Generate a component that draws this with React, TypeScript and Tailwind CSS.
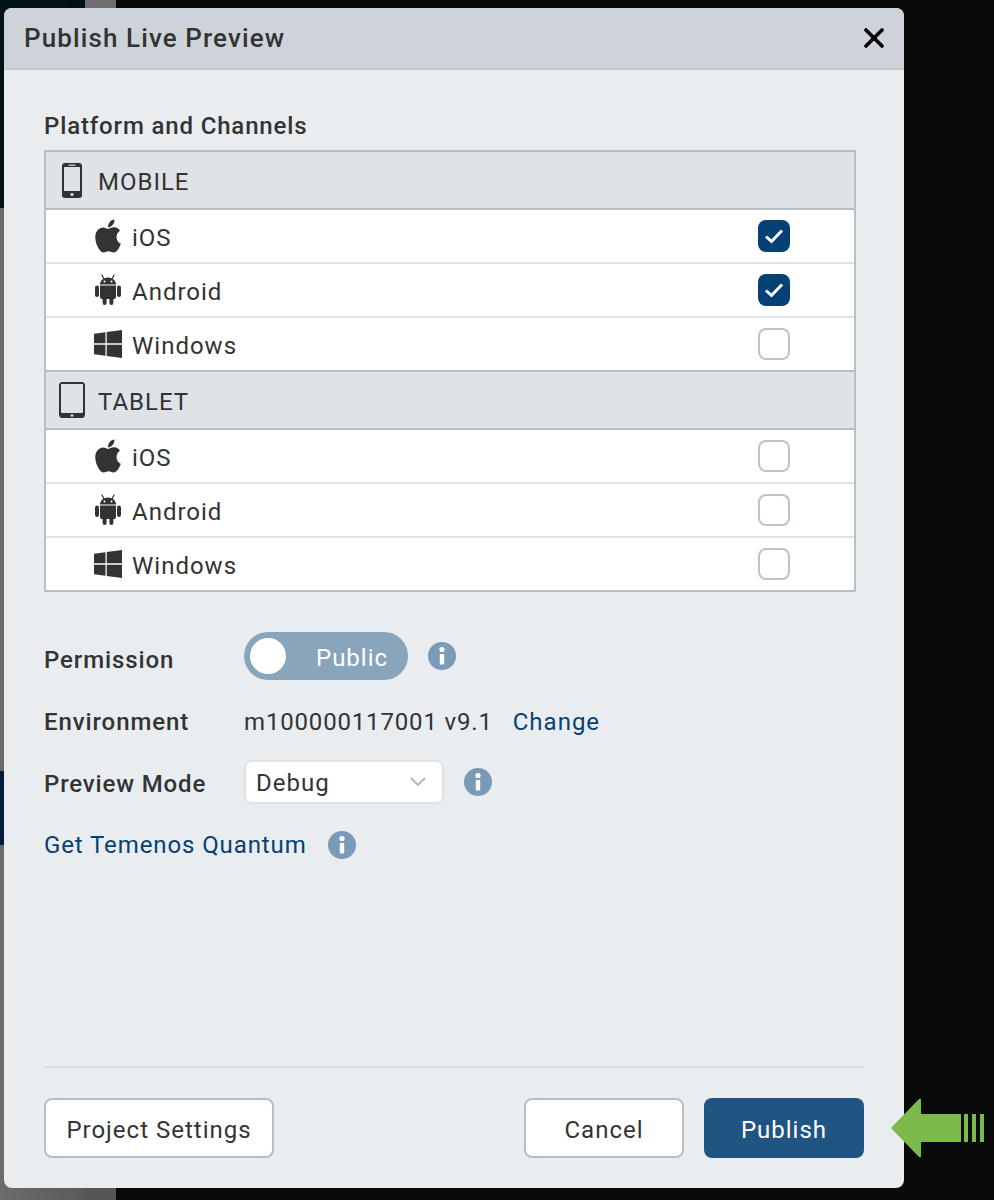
import React from "react";
import { FaApple, FaWindows } from "react-icons/fa";

const Info = ({ className = "" }: { className?: string }) => (
  <svg viewBox="0 0 28 28" className={`h-7 w-7 ${className}`}>
    <circle cx="14" cy="14" r="14" fill="#7b9ab8" />
    <circle cx="14" cy="7.5" r="2.6" fill="#fff" />
    <rect x="11.8" y="12" width="4.4" height="10.5" rx="0.8" fill="#fff" />
  </svg>
);

const Check = ({ on }: { on: boolean }) =>
  on ? (
    <div className="flex h-8 w-8 items-center justify-center rounded-lg bg-[#054174]">
      <svg viewBox="0 0 32 32" className="h-8 w-8" fill="none" stroke="#fff" strokeWidth="3">
        <path d="M8 16.5l5.5 5L24 10.5" />
      </svg>
    </div>
  ) : (
    <div className="h-8 w-8 rounded-lg border-2 border-[#bcc4c9] bg-white" />
  );

const Row = ({ icon, label, on, last }: { icon: React.ReactNode; label: string; on?: boolean; last?: boolean }) => (
  <div className={`flex items-center bg-white pl-[48px] pr-[64px] ${last ? "h-[52px]" : "h-[54px] border-b-2 border-[#e2e3e4]"}`}>
    <div className="flex w-[38px] items-center">{icon}</div>
    <span className="flex-1 pt-[4px] text-[24px] tracking-[1px] text-[#333333]">{label}</span>
    <Check on={!!on} />
  </div>
);

const Phone = () => (
  <svg viewBox="0 0 20 35" className="ml-[16px] h-[35px] w-[20px]">
    <rect x="0" y="0" width="20" height="35" rx="3" fill="#333" />
    <rect x="2" y="4" width="16" height="24" fill="#e0e3e6" />
    <rect x="6.5" y="1.6" width="7" height="1.2" fill="#e0e3e6" />
    <circle cx="10" cy="31.5" r="1.6" fill="#e0e3e6" />
  </svg>
);

const Tablet = () => (
  <svg viewBox="0 0 26 36" className="ml-[13px] h-[36px] w-[26px]">
    <rect x="0" y="0" width="26" height="36" rx="3.5" fill="#333" />
    <rect x="2" y="2" width="22" height="29" rx="1" fill="#e0e3e6" />
    <circle cx="13" cy="33.5" r="1.3" fill="#e0e3e6" />
  </svg>
);

const Android = () => (
  <svg viewBox="0 0 26 31" className="ml-[1px] h-[31px] w-[26px] -translate-y-[1px]" fill="#333333">
    <path d="M7 1l2 4M19 1l-2 4" stroke="#333333" strokeWidth="1.2" strokeLinecap="round" fill="none" />
    <path d="M5 10.5C5 6.5 8.6 3.5 13 3.5S21 6.5 21 10.5Z" />
    <circle cx="9.5" cy="7.4" r="1" fill="#fff" />
    <circle cx="16.5" cy="7.4" r="1" fill="#fff" />
    <path d="M5 11.5h16v11.5a2 2 0 0 1-2 2H7a2 2 0 0 1-2-2Z" />
    <rect x="0" y="11.5" width="4" height="11.5" rx="2" />
    <rect x="22" y="11.5" width="4" height="11.5" rx="2" />
    <rect x="7.6" y="23" width="4" height="8" rx="2" />
    <rect x="14.4" y="23" width="4" height="8" rx="2" />
  </svg>
);

const Header = ({ icon, label }: { icon: React.ReactNode; label: string }) => (
  <div className="flex h-[58px] items-center border-b-2 border-[#b6bfc4] bg-[#e0e3e6]">
    <div className="flex w-[52px] items-center">{icon}</div>
    <span className="pt-[4px] text-[24px] tracking-[1px] text-[#333333]">{label}</span>
  </div>
);

const Group = ({ mobile }: { mobile: boolean }) => (
  <>
    {mobile ? <Header icon={<Phone />} label="MOBILE" /> : <Header icon={<Tablet />} label="TABLET" />}
    <Row
      icon={<FaApple preserveAspectRatio="none" className="ml-[1px] h-[38px] w-[26px] text-[#333333]" />}
      label="iOS"
      on={mobile}
    />
    <Row icon={<Android />} label="Android" on={mobile} />
    <Row icon={<FaWindows className="h-[32px] w-[28px] text-[#333333]" />} label="Windows" last={!mobile} />
  </>
);

export default function App() {
  return (
    <div
      className="relative h-[1200px] w-[994px] overflow-hidden bg-[#0a0a0a]"
      style={{ fontFamily: "Roboto, 'Liberation Sans', sans-serif" }}
    >
      {/* dimmed page behind the dialog */}
      <div className="flex h-full w-[116px] flex-col">
        <div className="flex h-[208px]">
          <div className="w-[68px] bg-[#021318]" />
          <div className="w-[17px] bg-[#000f18]" />
          <div className="w-[31px] bg-[#6f6f6f]" />
        </div>
        <div className="h-[563px] bg-[#696969]" />
        <div className="h-[74px] bg-[#011c38]" />
        <div className="flex flex-1">
          <div className="w-[85px] bg-gradient-to-r from-[#6c6c6c] to-[#5a5a5a]" />
          <div className="w-[31px] bg-[#555555]" />
        </div>
      </div>

      {/* dialog */}
      <div className="absolute left-[4px] top-[8px] flex h-[1180px] w-[900px] flex-col overflow-hidden rounded-lg bg-[#e9edf0]">
        <div className="flex h-[62px] items-center justify-between border-b-2 border-[#c3c8cc] bg-[#ced3da] pl-[20px] pr-[20px]">
          <span className="text-[26px] font-medium tracking-[1.1px] text-[#333333]">Publish Live Preview</span>
          <svg viewBox="0 0 20 20" className="h-5 w-5" fill="none" stroke="#000" strokeWidth="3.6" strokeLinecap="round">
            <path d="M2 2l16 16M18 2L2 18" />
          </svg>
        </div>

        <div className="flex flex-1 flex-col px-[40px]">
          <div className="mt-[40px] text-[24px] font-medium leading-[32px] tracking-[0.85px] text-[#333333]">
            Platform and Channels
          </div>
          <div className="mt-[8px] w-[812px] border-2 border-[#b6bfc4]">
            <Group mobile />
            <div className="-mt-[2px] border-t-2 border-[#b6bfc4]">
              <Group mobile={false} />
            </div>
          </div>

          <div className="mt-[40px] flex h-[48px] items-center">
            <span className="w-[200px] pt-[8px] text-[24px] font-medium tracking-[0.9px] text-[#333333]">Permission</span>
            <div className="flex h-[48px] w-[164px] items-center rounded-full bg-[#88a5bc] pl-[6px]">
              <div className="h-9 w-9 rounded-full bg-white" />
              <span className="ml-[30px] pt-[4px] text-[24px] tracking-[1px] text-white">Public</span>
            </div>
            <Info className="ml-[20px]" />
          </div>

          <div className="mt-[26px] flex h-[32px] items-center">
            <span className="w-[200px] text-[24px] font-medium tracking-[0.9px] text-[#333333]">Environment</span>
            <span className="text-[24px] tracking-[0.83px] text-[#333333]">m100000117001 v9.1</span>
            <span className="ml-[20px] text-[24px] tracking-[1px] text-[#054174]">Change</span>
          </div>

          <div className="mt-[22px] flex h-[44px] items-center">
            <span className="w-[200px] pt-[4px] text-[24px] font-medium tracking-[0.85px] text-[#333333]">Preview Mode</span>
            <div className="flex h-[44px] w-[200px] items-center justify-between rounded-lg border-2 border-[#e0e2e4] bg-white pl-[10px] pr-[16px]">
              <span className="pt-[2px] text-[24px] tracking-[1px] text-[#333333]">Debug</span>
              <svg viewBox="0 0 16 10" className="h-[10px] w-4" fill="none" stroke="#b0b4b8" strokeWidth="1.8">
                <path d="M1 1l7 7 7-7" />
              </svg>
            </div>
            <Info className="ml-[20px]" />
          </div>

          <div className="mt-[25px] flex h-[32px] items-center">
            <span className="text-[24px] tracking-[0.9px] text-[#054174]">Get Temenos Quantum</span>
            <Info className="ml-[21px]" />
          </div>

          <div className="mt-auto h-[2px] w-[820px] bg-[#d9dde0]" />
          <div className="mb-[30px] mt-[30px] flex w-[820px] items-center justify-between">
            <button className="h-[60px] w-[230px] rounded-lg border-2 border-[#b6bfc4] bg-white pt-[4px] text-[24px] tracking-[1px] text-[#333333]">
              Project Settings
            </button>
            <div className="flex gap-[20px]">
              <button className="h-[60px] w-[160px] rounded-lg border-2 border-[#b6bfc4] bg-white pt-[4px] text-[24px] tracking-[1px] text-[#333333]">
                Cancel
              </button>
              <button className="h-[60px] w-[160px] rounded-lg bg-[#1f5483] pt-[4px] text-[24px] tracking-[1px] text-white">
                Publish
              </button>
            </div>
          </div>
        </div>
      </div>

      {/* callout arrow */}
      <svg viewBox="0 0 94 58" className="absolute left-[891px] top-[1099px] h-[58px] w-[94px]" fill="#7cba4c">
        <path d="M0 29L28 0h2v15h40v28H30v15h-2z" />
        <rect x="73" y="15" width="4" height="28" />
        <rect x="81" y="15" width="4" height="28" />
        <rect x="89" y="15" width="4" height="28" />
      </svg>
    </div>
  );
}
